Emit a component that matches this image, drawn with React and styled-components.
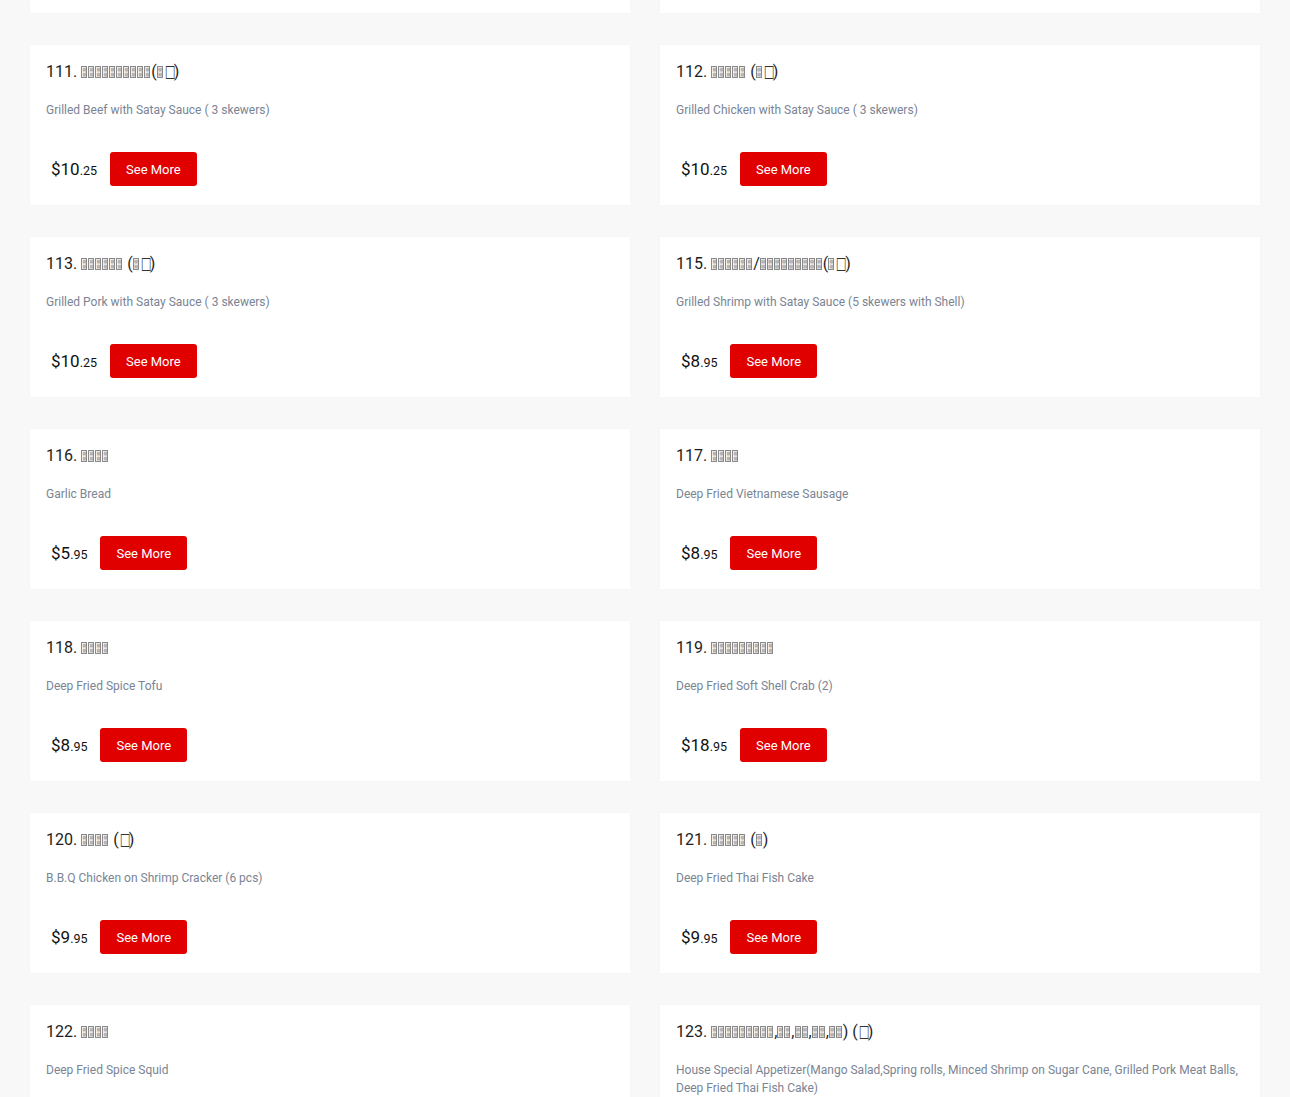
import styled, { createGlobalStyle } from "styled-components";

const GlobalStyle = createGlobalStyle`
  html, body {
    margin: 0;
    padding: 0;
    overflow: hidden;
  }
  body {
    background-color: #f8f8f8;
    font-family: Roboto, "Liberation Sans", Arial, sans-serif;
  }
`;

const Page = styled.div`
  padding: 0 30px;
`;

const Grid = styled.div`
  display: grid;
  grid-template-columns: 1fr 1fr;
  gap: 32px 30px;
  margin-top: -147px;
`;

const Card = styled.div`
  background-color: #ffffff;
  min-height: 160px;
  box-sizing: border-box;
  padding: 15px 16px 19px;
  box-shadow: 0 0 2px rgba(0, 0, 0, 0.03);
`;

const Title = styled.h3`
  margin: 0;
  font-size: 16px;
  line-height: 24px;
  font-weight: 400;
  color: #1e1e1e;
`;

const Tofu = styled.span`
  display: inline-block;
  box-sizing: border-box;
  width: 6px;
  height: 12px;
  margin-right: 1px;
  border: 1px solid #8a8a8a;
  font-family: "DejaVu Sans", sans-serif;
  font-size: 5px;
  line-height: 5px;
  color: #a0a0a0;
  text-align: center;
  overflow: hidden;
  vertical-align: -1px;
  word-break: break-all;
`;

const Square = styled.span`
  display: inline-block;
  width: 10px;
  font-family: "DejaVu Sans", sans-serif;
  font-size: 13px;
  line-height: 1;
  text-align: center;
  color: #333333;
  transform: scale(0.85, 1.3);
  vertical-align: 1px;
`;

const Desc = styled.p`
  margin: 17px 0 0;
  font-size: 12px;
  line-height: 18px;
  color: #7a8494;
`;

const PriceRow = styled.div`
  display: flex;
  align-items: center;
  gap: 13px;
  margin-top: 33px;
  padding-left: 5px;
`;

const Price = styled.span`
  font-size: 17px;
  color: #111111;
`;

const Cents = styled.span`
  font-size: 12.5px;
`;

const Button = styled.button`
  height: 34px;
  padding: 0 16px;
  border: none;
  border-radius: 3px;
  background-color: #e00000;
  color: #ffffff;
  font-family: Roboto, "Liberation Sans", Arial, sans-serif;
  font-size: 13px;
  cursor: pointer;
`;

const items = [
  { hidden: true },
  { hidden: true },
  { name: "111. ▩▩▩▩▩▩▩▩▩▩(▩□)", desc: "Grilled Beef with Satay Sauce ( 3 skewers)", price: "10.25" },
  { name: "112. ▩▩▩▩▩ (▩□)", desc: "Grilled Chicken with Satay Sauce ( 3 skewers)", price: "10.25" },
  { name: "113. ▩▩▩▩▩▩ (▩□)", desc: "Grilled Pork with Satay Sauce ( 3 skewers)", price: "10.25" },
  { name: "115. ▩▩▩▩▩▩/▩▩▩▩▩▩▩▩▩(▩□)", desc: "Grilled Shrimp with Satay Sauce (5 skewers with Shell)", price: "8.95" },
  { name: "116. ▩▩▩▩", desc: "Garlic Bread", price: "5.95" },
  { name: "117. ▩▩▩▩", desc: "Deep Fried Vietnamese Sausage", price: "8.95" },
  { name: "118. ▩▩▩▩", desc: "Deep Fried Spice Tofu", price: "8.95" },
  { name: "119. ▩▩▩▩▩▩▩▩▩", desc: "Deep Fried Soft Shell Crab (2)", price: "18.95" },
  { name: "120. ▩▩▩▩ (□)", desc: "B.B.Q Chicken on Shrimp Cracker (6 pcs)", price: "9.95" },
  { name: "121. ▩▩▩▩▩ (▩)", desc: "Deep Fried Thai Fish Cake", price: "9.95" },
  { name: "122. ▩▩▩▩", desc: "Deep Fried Spice Squid", price: "12.95" },
  {
    name: "123. ▩▩▩▩▩▩▩▩▩,▩▩,▩▩,▩▩,▩▩) (□)",
    desc: "House Special Appetizer(Mango Salad,Spring rolls, Minced Shrimp on Sugar Cane, Grilled Pork Meat Balls, Deep Fried Thai Fish Cake)",
    price: "19.95",
  },
];

function renderName(name) {
  return Array.from(name).map((ch, i) => {
    if (ch === "▩") return <Tofu key={i}>▩▩</Tofu>;
    if (ch === "□") return <Square key={i}>□</Square>;
    return ch;
  });
}

function MenuCard({ item }) {
  if (item.hidden) return <Card />;
  const [dollars, cents] = item.price.split(".");
  return (
    <Card>
      <Title>{renderName(item.name)}</Title>
      <Desc>{item.desc}</Desc>
      <PriceRow>
        <Price>
          ${dollars}
          <Cents>.{cents}</Cents>
        </Price>
        <Button type="button">See More</Button>
      </PriceRow>
    </Card>
  );
}

function App() {
  return (
    <>
      <GlobalStyle />
      <Page>
        <Grid>
          {items.map((item, i) => (
            <MenuCard key={i} item={item} />
          ))}
        </Grid>
      </Page>
    </>
  );
}

export default App;
